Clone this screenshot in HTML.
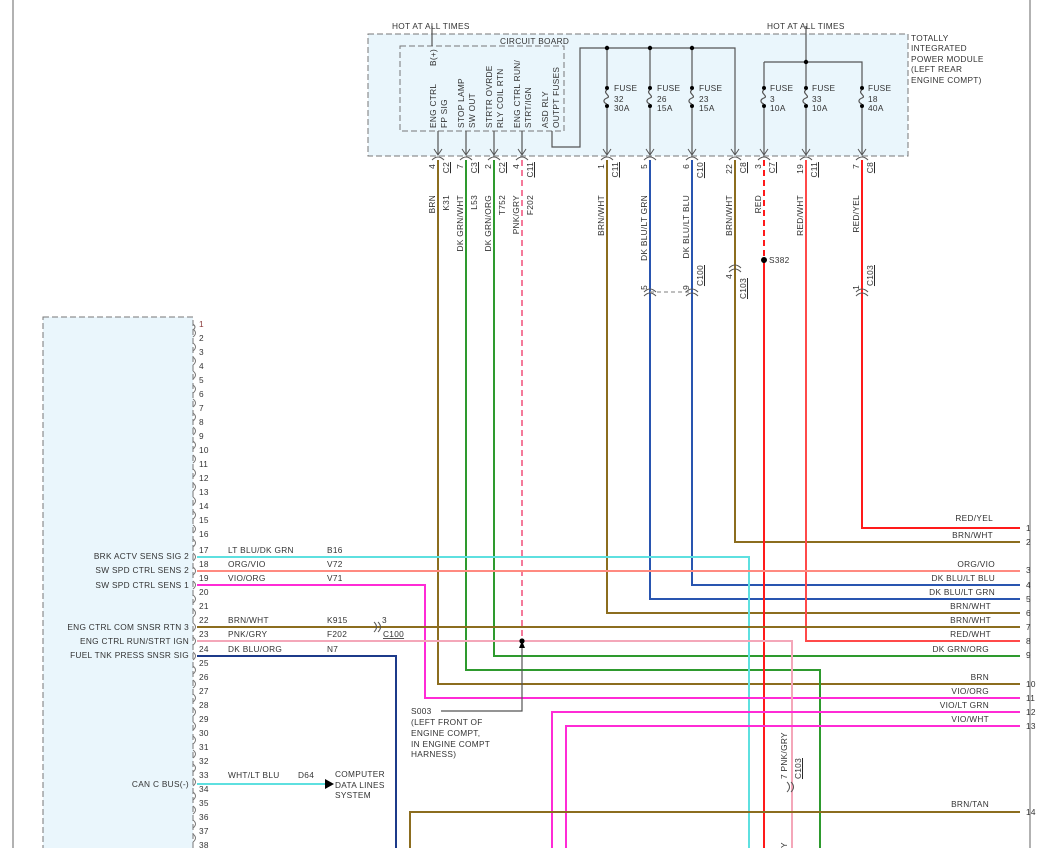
<!DOCTYPE html><html><head><style>body{margin:0;background:#fff}svg{display:block}text{font-family:"Liberation Sans",sans-serif;font-size:8.3px;fill:#333;letter-spacing:.3px}.r{fill:#8a3a3a}</style></head><body>
<svg width="1042" height="848" viewBox="0 0 1042 848" xmlns="http://www.w3.org/2000/svg">
<line x1="13" y1="0" x2="13" y2="848" stroke="#666" stroke-width="1"/>
<line x1="1030" y1="0" x2="1030" y2="848" stroke="#666" stroke-width="1"/>
<rect x="368" y="34" width="540" height="122" fill="#eaf6fc" stroke="#777" stroke-dasharray="6,3"/>
<rect x="400" y="46" width="164" height="85" fill="none" stroke="#777" stroke-dasharray="6,3"/>
<rect x="43" y="317" width="150" height="540" fill="#eaf6fc" stroke="#777" stroke-dasharray="6,3"/>
<g fill="none" stroke-width="2">
<!-- top wires -->
<path d="M438 160V684H1020" stroke="#8c6d1f"/>
<path d="M466 160V670H820V848" stroke="#2e9a2e"/>
<path d="M494 160V656H1020" stroke="#2e9a2e"/>
<path d="M522 160V641" stroke="#f47a9a" stroke-dasharray="6,4"/>
<path d="M607 160V613H1020" stroke="#8c6d1f"/>
<path d="M650 160V599H1020" stroke="#2955b0"/>
<path d="M692 160V585H1020" stroke="#2955b0"/>
<path d="M735 160V542H1020" stroke="#8c6d1f"/>
<path d="M764 160V260" stroke="#ff1a1a" stroke-dasharray="6,4"/>
<path d="M764 260V848" stroke="#ff1a1a"/>
<path d="M806 160V641H1020" stroke="#ff4a4a"/>
<path d="M862 160V528H1020" stroke="#ff1a1a"/>
<!-- left wires -->
<path d="M197 557H749V848" stroke="#5ee0e0"/>
<path d="M197 571H1020" stroke="#ff8a80"/>
<path d="M197 585H425V698H1020" stroke="#ff2bd6"/>
<path d="M197 627H1020" stroke="#8c6d1f"/>
<path d="M197 641H792V848" stroke="#f4a7b9"/>
<path d="M197 656H396V848" stroke="#1c3a8a"/>
<path d="M197 784H325" stroke="#5ee0e0"/>
<path d="M552 848V712H1020" stroke="#ff2bd6"/>
<path d="M566 848V726H1020" stroke="#ff2bd6"/>
<path d="M410 848V812H1020" stroke="#8c6d1f"/>
</g>
<path d="M522 641H1020" stroke="#f4a7b9" stroke-width="2" fill="none" opacity="0"/>
<line x1="528" y1="1" x2="1" y2="1" stroke="none"/>
<!-- internal lines -->
<g fill="none" stroke="#555" stroke-width="1.2">
<path d="M432 26V46"/><path d="M806 26V156"/>
<path d="M438 131V154M466 131V154M494 131V154M522 131V154"/>
<path d="M552 131V147H580V48H735V154"/>
<path d="M607 48V154M650 48V154M692 48V154"/>
<path d="M764 62H862V154M764 62V154"/>
<path d="M441 711H522V648"/>
<path d="M650 292H692" stroke-dasharray="4,3" stroke="#999"/>
</g>
<path d="M522 641l-3 7h6z" fill="#000"/>
<g fill="#000"><circle cx="607" cy="48" r="2.2"/><circle cx="650" cy="48" r="2.2"/><circle cx="692" cy="48" r="2.2"/><circle cx="806" cy="62" r="2.2"/><circle cx="522" cy="641" r="2.6"/><circle cx="764" cy="260" r="3"/><path d="M325 779v10l9-5z"/></g>
<!-- fuses -->
<g fill="#000" stroke="none">
<circle cx="607" cy="88" r="2"/><circle cx="607" cy="106" r="2"/><circle cx="650" cy="88" r="2"/><circle cx="650" cy="106" r="2"/><circle cx="692" cy="88" r="2"/><circle cx="692" cy="106" r="2"/><circle cx="764" cy="88" r="2"/><circle cx="764" cy="106" r="2"/><circle cx="806" cy="88" r="2"/><circle cx="806" cy="106" r="2"/><circle cx="862" cy="88" r="2"/><circle cx="862" cy="106" r="2"/></g>
<g fill="none" stroke="#eaf6fc" stroke-width="3"><path d="M607 90V104M650 90V104M692 90V104M764 90V104M806 90V104M862 90V104"/></g>
<g fill="none" stroke="#555" stroke-width="1.2"><path d="M607 90c-5 3 5 6 0 8s-3 5 0 6M650 90c-5 3 5 6 0 8s-3 5 0 6M692 90c-5 3 5 6 0 8s-3 5 0 6M764 90c-5 3 5 6 0 8s-3 5 0 6M806 90c-5 3 5 6 0 8s-3 5 0 6M862 90c-5 3 5 6 0 8s-3 5 0 6"/></g>
<!-- arrows at connectors -->
<g fill="none" stroke="#555" stroke-width="1"><path d="M434 149l4 6 4-6M462 149l4 6 4-6M490 149l4 6 4-6M518 149l4 6 4-6M603 149l4 6 4-6M646 149l4 6 4-6M688 149l4 6 4-6M731 149l4 6 4-6M760 149l4 6 4-6M802 149l4 6 4-6M858 149l4 6 4-6"/>
<path d="M432 160q6-6 12 0M460 160q6-6 12 0M488 160q6-6 12 0M516 160q6-6 12 0M601 160q6-6 12 0M644 160q6-6 12 0M686 160q6-6 12 0M729 160q6-6 12 0M758 160q6-6 12 0M800 160q6-6 12 0M856 160q6-6 12 0"/>
<path d="M644 292q6-6 12 0M644 296q6-6 12 0M686 292q6-6 12 0M686 296q6-6 12 0M729 268q6-6 12 0M729 272q6-6 12 0M856 292q6-6 12 0M856 296q6-6 12 0"/>
<path d="M374 622q5 5 0 10M378 622q5 5 0 10M787 782q5 5 0 10M791 782q5 5 0 10"/>
</g>
<g fill="none" stroke="#777" stroke-width="1">
<path id="p" d="M193 324q4 3 0 6"/>
</g>
<g fill="none" stroke="#666" stroke-width="1" id="pins"></g>
<!-- text -->
<text x="392" y="29">HOT AT ALL TIMES</text><text x="767" y="29">HOT AT ALL TIMES</text>
<text x="500" y="44">CIRCUIT BOARD</text>
<text x="911" y="41">TOTALLY</text><text x="911" y="51">INTEGRATED</text><text x="911" y="62">POWER MODULE</text><text x="911" y="72">(LEFT REAR</text><text x="911" y="83">ENGINE COMPT)</text>
<g><text x="614" y="91">FUSE</text><text x="614" y="102">32</text><text x="614" y="111">30A</text>
<text x="657" y="91">FUSE</text><text x="657" y="102">26</text><text x="657" y="111">15A</text>
<text x="699" y="91">FUSE</text><text x="699" y="102">23</text><text x="699" y="111">15A</text>
<text x="770" y="91">FUSE</text><text x="770" y="102">3</text><text x="770" y="111">10A</text>
<text x="812" y="91">FUSE</text><text x="812" y="102">33</text><text x="812" y="111">10A</text>
<text x="868" y="91">FUSE</text><text x="868" y="102">18</text><text x="868" y="111">40A</text></g>
<g>
<text transform="translate(436,66) rotate(-90)">B(+)</text>
<text transform="translate(436,128) rotate(-90)">ENG CTRL</text>
<text transform="translate(447,128) rotate(-90)">FP SIG</text>
<text transform="translate(464,128) rotate(-90)">STOP LAMP</text>
<text transform="translate(475,128) rotate(-90)">SW OUT</text>
<text transform="translate(492,128) rotate(-90)">STRTR OVRDE</text>
<text transform="translate(503,128) rotate(-90)">RLY COIL RTN</text>
<text transform="translate(520,128) rotate(-90)">ENG CTRL RUN/</text>
<text transform="translate(531,128) rotate(-90)">STRT/IGN</text>
<text transform="translate(548,128) rotate(-90)">ASD RLY</text>
<text transform="translate(559,128) rotate(-90)">OUTPT FUSES</text>
</g>
<g text-anchor="end">
<text transform="translate(435,195) rotate(-90)">BRN</text><text transform="translate(449,195) rotate(-90)">K31</text>
<text transform="translate(463,195) rotate(-90)">DK GRN/WHT</text><text transform="translate(477,195) rotate(-90)">L53</text>
<text transform="translate(491,195) rotate(-90)">DK GRN/ORG</text><text transform="translate(505,195) rotate(-90)">T752</text>
<text transform="translate(519,195) rotate(-90)">PNK/GRY</text><text transform="translate(533,195) rotate(-90)">F202</text>
<text transform="translate(604,195) rotate(-90)">BRN/WHT</text>
<text transform="translate(647,195) rotate(-90)">DK BLU/LT GRN</text>
<text transform="translate(689,195) rotate(-90)">DK BLU/LT BLU</text>
<text transform="translate(732,195) rotate(-90)">BRN/WHT</text>
<text transform="translate(761,195) rotate(-90)">RED</text>
<text transform="translate(803,195) rotate(-90)">RED/WHT</text>
<text transform="translate(859,195) rotate(-90)">RED/YEL</text>
<text transform="translate(435,164) rotate(-90)">4</text><text transform="translate(463,164) rotate(-90)">7</text><text transform="translate(491,164) rotate(-90)">2</text><text transform="translate(519,164) rotate(-90)">4</text><text transform="translate(604,164) rotate(-90)">1</text><text transform="translate(647,164) rotate(-90)">5</text><text transform="translate(689,164) rotate(-90)">6</text><text transform="translate(732,164) rotate(-90)">22</text><text transform="translate(761,164) rotate(-90)">3</text><text transform="translate(803,164) rotate(-90)">19</text><text transform="translate(859,164) rotate(-90)">7</text>
<text transform="translate(647,285) rotate(-90)">5</text><text transform="translate(689,285) rotate(-90)">9</text><text transform="translate(732,274) rotate(-90)">4</text><text transform="translate(859,285) rotate(-90)">1</text>
</g>
<g text-anchor="end" text-decoration="underline">
<text transform="translate(449,162) rotate(-90)">C2</text><text transform="translate(477,162) rotate(-90)">C3</text><text transform="translate(505,162) rotate(-90)">C2</text><text transform="translate(533,162) rotate(-90)">C11</text><text transform="translate(618,162) rotate(-90)">C11</text><text transform="translate(703,162) rotate(-90)">C10</text><text transform="translate(746,162) rotate(-90)">C8</text><text transform="translate(775,162) rotate(-90)">C7</text><text transform="translate(817,162) rotate(-90)">C11</text><text transform="translate(873,162) rotate(-90)">C8</text>
<text transform="translate(703,265) rotate(-90)">C100</text><text transform="translate(746,278) rotate(-90)">C103</text><text transform="translate(873,265) rotate(-90)">C103</text>
<text transform="translate(801,758) rotate(-90)">C103</text>
</g>
<text transform="translate(787,779) rotate(-90)">7 PNK/GRY</text>
<text transform="translate(787,848) rotate(-90)">Y</text>
<text x="769" y="263">S382</text>
<!-- pin labels -->
<g font-size="8"><text x="199" y="327" class="r">1</text><text x="199" y="341">2</text><text x="199" y="355">3</text><text x="199" y="369">4</text><text x="199" y="383">5</text><text x="199" y="397">6</text><text x="199" y="411">7</text><text x="199" y="425">8</text><text x="199" y="439">9</text><text x="199" y="453">10</text><text x="199" y="467">11</text><text x="199" y="481">12</text><text x="199" y="495">13</text><text x="199" y="509">14</text><text x="199" y="523">15</text><text x="199" y="537">16</text><text x="199" y="553">17</text><text x="199" y="567">18</text><text x="199" y="581">19</text><text x="199" y="595">20</text><text x="199" y="609">21</text><text x="199" y="623">22</text><text x="199" y="637">23</text><text x="199" y="652">24</text><text x="199" y="666">25</text><text x="199" y="680">26</text><text x="199" y="694">27</text><text x="199" y="708">28</text><text x="199" y="722">29</text><text x="199" y="736">30</text><text x="199" y="750">31</text><text x="199" y="764">32</text><text x="199" y="778">33</text><text x="199" y="792">34</text><text x="199" y="806">35</text><text x="199" y="820">36</text><text x="199" y="834">37</text><text x="199" y="848">38</text></g>
<g fill="none" stroke="#777" stroke-width="1"><path d="M193 329q5 4 0 8M193 343q5 4 0 8M193 357q5 4 0 8M193 371q5 4 0 8M193 385q5 4 0 8M193 399q5 4 0 8M193 413q5 4 0 8M193 427q5 4 0 8M193 441q5 4 0 8M193 455q5 4 0 8M193 469q5 4 0 8M193 483q5 4 0 8M193 497q5 4 0 8M193 511q5 4 0 8M193 525q5 4 0 8M193 539q5 4 0 8M193 553q5 4 0 8M193 567q5 4 0 8M193 581q5 4 0 8M193 595q5 4 0 8M193 609q5 4 0 8M193 623q5 4 0 8M193 637q5 4 0 8M193 652q5 4 0 8M193 666q5 4 0 8M193 680q5 4 0 8M193 694q5 4 0 8M193 708q5 4 0 8M193 722q5 4 0 8M193 736q5 4 0 8M193 750q5 4 0 8M193 764q5 4 0 8M193 778q5 4 0 8M193 792q5 4 0 8M193 806q5 4 0 8M193 820q5 4 0 8M193 834q5 4 0 8"/></g>
<g text-anchor="end"><text x="189" y="559">BRK ACTV SENS SIG 2</text><text x="189" y="573">SW SPD CTRL SENS 2</text><text x="189" y="588">SW SPD CTRL SENS 1</text><text x="189" y="630">ENG CTRL COM SNSR RTN 3</text><text x="189" y="644">ENG CTRL RUN/STRT IGN</text><text x="189" y="658">FUEL TNK PRESS SNSR SIG</text><text x="189" y="787">CAN C BUS(-)</text></g>
<text x="228" y="553">LT BLU/DK GRN</text><text x="327" y="553">B16</text>
<text x="228" y="567">ORG/VIO</text><text x="327" y="567">V72</text>
<text x="228" y="581">VIO/ORG</text><text x="327" y="581">V71</text>
<text x="228" y="623">BRN/WHT</text><text x="327" y="623">K915</text>
<text x="228" y="637">PNK/GRY</text><text x="327" y="637">F202</text>
<text x="228" y="652">DK BLU/ORG</text><text x="327" y="652">N7</text>
<text x="228" y="778">WHT/LT BLU</text><text x="298" y="778">D64</text>
<text x="382" y="623">3</text><text x="383" y="637" text-decoration="underline">C100</text>
<text x="335" y="777">COMPUTER</text><text x="335" y="788">DATA LINES</text><text x="335" y="798">SYSTEM</text>
<text x="411" y="714">S003</text><text x="411" y="725">(LEFT FRONT OF</text><text x="411" y="736">ENGINE COMPT,</text><text x="411" y="747">IN ENGINE COMPT</text><text x="411" y="757">HARNESS)</text>
<g text-anchor="end"><text x="993" y="521">RED/YEL</text><text x="993" y="538">BRN/WHT</text><text x="995" y="567">ORG/VIO</text><text x="995" y="581">DK BLU/LT BLU</text><text x="995" y="595">DK BLU/LT GRN</text><text x="991" y="609">BRN/WHT</text><text x="991" y="623">BRN/WHT</text><text x="991" y="637">RED/WHT</text><text x="989" y="652">DK GRN/ORG</text><text x="989" y="680">BRN</text><text x="989" y="694">VIO/ORG</text><text x="989" y="708">VIO/LT GRN</text><text x="989" y="722">VIO/WHT</text><text x="989" y="807">BRN/TAN</text></g>
<g font-size="8"><text x="1026" y="531">1</text><text x="1026" y="545">2</text><text x="1026" y="573">3</text><text x="1026" y="588">4</text><text x="1026" y="602">5</text><text x="1026" y="616">6</text><text x="1026" y="630">7</text><text x="1026" y="644">8</text><text x="1026" y="658">9</text><text x="1026" y="687">10</text><text x="1026" y="701">11</text><text x="1026" y="715">12</text><text x="1026" y="729">13</text><text x="1026" y="815">14</text></g>
</svg></body></html>
